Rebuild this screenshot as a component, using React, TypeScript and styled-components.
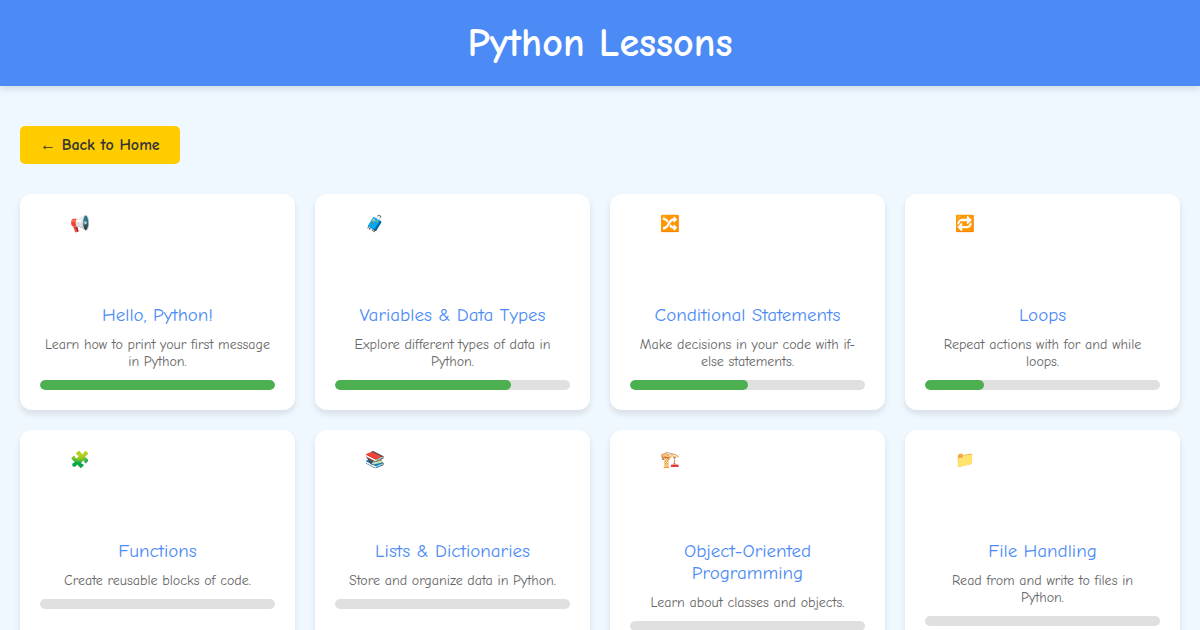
import React from "react";
import styled, { createGlobalStyle } from "styled-components";

const GlobalStyle = createGlobalStyle`
  * {
    box-sizing: border-box;
  }
  body {
    margin: 0;
    background: #f0f8ff;
    font-family: "Comic Neue", "Comic Sans MS", Lato, "Noto Color Emoji", sans-serif;
    color: #333;
  }
`;

const Header = styled.header`
  padding: 20px;
  background: #4c8bf5;
  color: #fff;
  text-align: center;
  box-shadow: 0 4px 6px rgba(0, 0, 0, 0.1);
`;

const PageTitle = styled.h1`
  margin: 0;
  font-size: 40px;
  font-weight: 700;
  line-height: 46px;
`;

const Main = styled.main`
  padding: 40px 20px;
`;

const BackButton = styled.button`
  display: block;
  margin: 0 0 30px;
  padding: 10px 20px;
  border: 0;
  border-radius: 5px;
  background: #fc0;
  color: #333;
  font-family: inherit;
  font-size: 16px;
  font-weight: 700;
  line-height: 18px;
  cursor: pointer;
`;

const Arrow = styled.span`
  font-family: "Liberation Sans", sans-serif;
  font-weight: 400;
`;

const LessonGrid = styled.div`
  display: grid;
  grid-template-columns: repeat(auto-fit, minmax(250px, 1fr));
  gap: 20px;
`;

const Card = styled.article`
  padding: 20px;
  border-radius: 12px;
  background: #fff;
  box-shadow: 0 4px 6px rgba(0, 0, 0, 0.1);
  text-align: center;
`;

const CardIcon = styled.div`
  max-width: 175px;
  height: 80px;
  margin: 0 auto 10px;
  font-size: 16px;
  line-height: 20px;
  text-align: left;
`;

const CardTitle = styled.h2`
  margin: 0 0 10px;
  color: #4c8bf5;
  font-size: 19px;
  font-weight: 400;
  line-height: 22px;
`;

const CardText = styled.p`
  margin: 0 0 10px;
  color: #666;
  font-size: 14px;
  font-weight: 400;
  line-height: 17px;
  white-space: pre-line;
`;

const Track = styled.div`
  height: 10px;
  overflow: hidden;
  border-radius: 5px;
  background: #e0e0e0;
`;

const Fill = styled.div`
  height: 100%;
  border-radius: 5px;
  background: #4caf50;
`;

interface Lesson {
  icon: string;
  title: string;
  text: string;
  progress: number;
}

const lessons: Lesson[] = [
  { icon: "📢", title: "Hello, Python!", text: "Learn how to print your first message in Python.", progress: 100 },
  { icon: "🧳", title: "Variables & Data Types", text: "Explore different types of data in Python.", progress: 75 },
  { icon: "🔀", title: "Conditional Statements", text: "Make decisions in your code with if-else statements.", progress: 50 },
  { icon: "🔁", title: "Loops", text: "Repeat actions with for and while loops.", progress: 25 },
  { icon: "🧩", title: "Functions", text: "Create reusable blocks of code.", progress: 0 },
  { icon: "📚", title: "Lists & Dictionaries", text: "Store and organize data in Python.", progress: 0 },
  { icon: "🏗️", title: "Object-Oriented Programming", text: "Learn about classes and objects.", progress: 0 },
  { icon: "📁", title: "File Handling", text: "Read from and write to files in\nPython.", progress: 0 },
];

export default function App() {
  return (
    <>
      <GlobalStyle />
      <Header>
        <PageTitle>Python Lessons</PageTitle>
      </Header>
      <Main>
        <BackButton type="button">
          <Arrow>←</Arrow> Back to Home
        </BackButton>
        <LessonGrid>
          {lessons.map((lesson) => (
            <Card key={lesson.title}>
              <CardIcon aria-hidden="true">{lesson.icon}</CardIcon>
              <CardTitle>{lesson.title}</CardTitle>
              <CardText>{lesson.text}</CardText>
              <Track
                role="progressbar"
                aria-label={lesson.title}
                aria-valuemin={0}
                aria-valuemax={100}
                aria-valuenow={lesson.progress}
              >
                <Fill style={{ width: `${lesson.progress}%` }} />
              </Track>
            </Card>
          ))}
        </LessonGrid>
      </Main>
    </>
  );
}
